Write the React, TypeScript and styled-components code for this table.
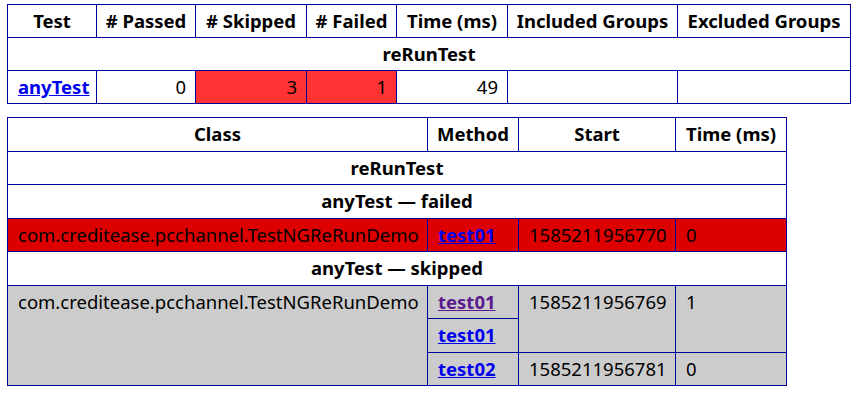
import React from 'react';
import styled, { createGlobalStyle } from 'styled-components';

const GlobalStyle = createGlobalStyle`
  html, body {
    margin: 0;
    background: #fff;
  }
  body {
    padding: 4px 7px;
    font-family: "Noto Sans", "Liberation Sans", sans-serif;
    font-size: 18.5px;
    color: #000;
  }
`;

const Report = styled.div`
  display: flex;
  flex-direction: column;
  align-items: flex-start;
  gap: 13px;
`;

// $row is the inner line height of each row; the border adds one pixel
const Table = styled.table<{ $width: number; $row: number }>`
  width: ${p => p.$width}px;
  border-collapse: collapse;
  table-layout: fixed;
  empty-cells: show;

  th,
  td {
    line-height: ${p => p.$row}px;
  }
`;

const HeadCell = styled.th`
  border: 1px solid #009;
  padding: 0 8px;
  font-weight: bold;
  text-align: center;
  white-space: nowrap;
`;

type Tone = 'plain' | 'attn' | 'failed' | 'skipped';

const toneColors: { [key in Tone]: string } = {
  plain: 'transparent',
  attn: '#f33',
  failed: '#d00',
  skipped: '#ccc',
};

const Cell = styled.td<{ $tone?: Tone; $num?: boolean }>`
  border: 1px solid #009;
  padding: 0 9px 0 10px;
  vertical-align: top;
  white-space: nowrap;
  text-align: ${p => (p.$num ? 'right' : 'left')};
  background-color: ${p => toneColors[p.$tone || 'plain']};
`;

const MethodLink = styled.a<{ $visited?: boolean }>`
  color: ${p => (p.$visited ? '#5b1a8c' : '#00e')};
  font-weight: bold;
  text-decoration: underline;
`;

const summaryCols = [89, 99, 111, 90, 111, 170, 173];
const detailCols = [420, 91, 157, 111];

const sum = (xs: number[]) => xs.reduce((a, b) => a + b, 0);

const App: React.FC = () => {
  return (
    <>
      <GlobalStyle />
      <Report>
        <Table $width={sum(summaryCols)} $row={32}>
          <colgroup>
            {summaryCols.map((w, i) => (
              <col key={i} style={{ width: w }} />
            ))}
          </colgroup>
          <thead>
            <tr>
              <HeadCell>Test</HeadCell>
              <HeadCell># Passed</HeadCell>
              <HeadCell># Skipped</HeadCell>
              <HeadCell># Failed</HeadCell>
              <HeadCell>Time (ms)</HeadCell>
              <HeadCell>Included Groups</HeadCell>
              <HeadCell>Excluded Groups</HeadCell>
            </tr>
          </thead>
          <tbody>
            <tr>
              <HeadCell colSpan={7}>reRunTest</HeadCell>
            </tr>
            <tr>
              <Cell>
                <MethodLink href="#t0">anyTest</MethodLink>
              </Cell>
              <Cell $num>0</Cell>
              <Cell $num $tone="attn">3</Cell>
              <Cell $num $tone="attn">1</Cell>
              <Cell $num>49</Cell>
              <Cell></Cell>
              <Cell></Cell>
            </tr>
          </tbody>
        </Table>

        <Table $width={sum(detailCols)} $row={32.5}>
          <colgroup>
            {detailCols.map((w, i) => (
              <col key={i} style={{ width: w }} />
            ))}
          </colgroup>
          <thead>
            <tr>
              <HeadCell>Class</HeadCell>
              <HeadCell>Method</HeadCell>
              <HeadCell>Start</HeadCell>
              <HeadCell>Time (ms)</HeadCell>
            </tr>
          </thead>
          <tbody>
            <tr>
              <HeadCell colSpan={4}>reRunTest</HeadCell>
            </tr>
            <tr>
              <HeadCell colSpan={4}>anyTest &mdash; failed</HeadCell>
            </tr>
            <tr>
              <Cell $tone="failed">com.creditease.pcchannel.TestNGReRunDemo</Cell>
              <Cell $tone="failed">
                <MethodLink href="#m0">test01</MethodLink>
              </Cell>
              <Cell $tone="failed">1585211956770</Cell>
              <Cell $tone="failed">0</Cell>
            </tr>
            <tr>
              <HeadCell colSpan={4}>anyTest &mdash; skipped</HeadCell>
            </tr>
            <tr>
              <Cell $tone="skipped" rowSpan={3}>
                com.creditease.pcchannel.TestNGReRunDemo
              </Cell>
              <Cell $tone="skipped">
                <MethodLink href="#m1" $visited>test01</MethodLink>
              </Cell>
              <Cell $tone="skipped" rowSpan={2}>1585211956769</Cell>
              <Cell $tone="skipped" rowSpan={2}>1</Cell>
            </tr>
            <tr>
              <Cell $tone="skipped">
                <MethodLink href="#m2">test01</MethodLink>
              </Cell>
            </tr>
            <tr>
              <Cell $tone="skipped">
                <MethodLink href="#m3">test02</MethodLink>
              </Cell>
              <Cell $tone="skipped">1585211956781</Cell>
              <Cell $tone="skipped">0</Cell>
            </tr>
          </tbody>
        </Table>
      </Report>
    </>
  );
};

export default App;
